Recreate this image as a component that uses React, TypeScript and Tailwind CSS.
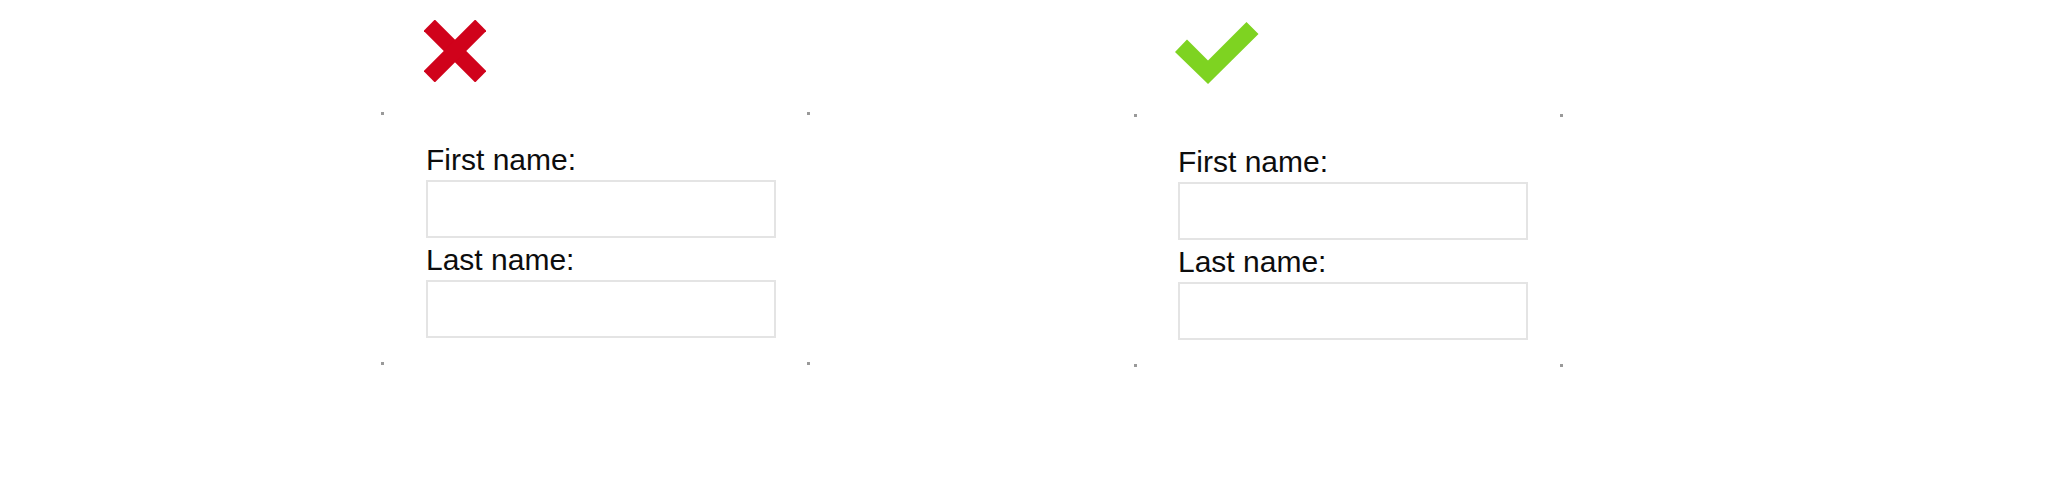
import React from 'react';

function CrossIcon() {
  return (
    <svg width="62" height="62" viewBox="0 0 62 62" className="block">
      <g transform="rotate(45 31 31)" fill="#d0021b">
        <rect x="-5.5" y="23" width="73" height="16" />
        <rect x="23" y="-5.5" width="16" height="73" />
      </g>
    </svg>
  );
}

function CheckIcon() {
  return (
    <svg width="84" height="64" viewBox="0 0 84 64" className="block">
      <polygon points="0,32 12,19.5 33,40.5 71.5,2 83.5,14 33,64" fill="#7ed321" />
    </svg>
  );
}

function Field({ label, first }: { label: string; first?: boolean }) {
  return (
    <div className={first ? '' : 'mt-[5px]'}>
      <div className="text-[30px] leading-[34px] text-[#0d0d0d] mb-[3px]">{label}</div>
      <div className="w-[350px] h-[58px] border-2 border-[#e4e4e4] bg-white" />
    </div>
  );
}

function Dot({ pos }: { pos: string }) {
  return <span className={`absolute w-[3px] h-[3px] bg-[#9a9a9a] ${pos}`} />;
}

function Example({ good }: { good?: boolean }) {
  return (
    <div className="w-[429px] flex flex-col">
      <div className={good ? 'ml-[41px] mt-[20px] h-[64px]' : 'ml-[43px] mt-[20px] h-[62px]'}>
        {good ? <CheckIcon /> : <CrossIcon />}
      </div>
      <div className={`relative h-[253px] mt-[30px] pt-[31px] ${good ? 'pl-[44px]' : 'pl-[45px]'}`}>
        <Dot pos="left-0 top-0" />
        <Dot pos="right-0 top-0" />
        <Dot pos="left-0 bottom-0" />
        <Dot pos="right-0 bottom-0" />
        <Field label="First name:" first />
        <Field label="Last name:" />
      </div>
    </div>
  );
}

export default function App() {
  return (
    <div
      className="w-[2048px] h-[500px] bg-white flex items-start pl-[381px] gap-[324px]"
      style={{ fontFamily: '"Liberation Sans", Arial, sans-serif' }}
    >
      <Example />
      <Example good />
    </div>
  );
}
